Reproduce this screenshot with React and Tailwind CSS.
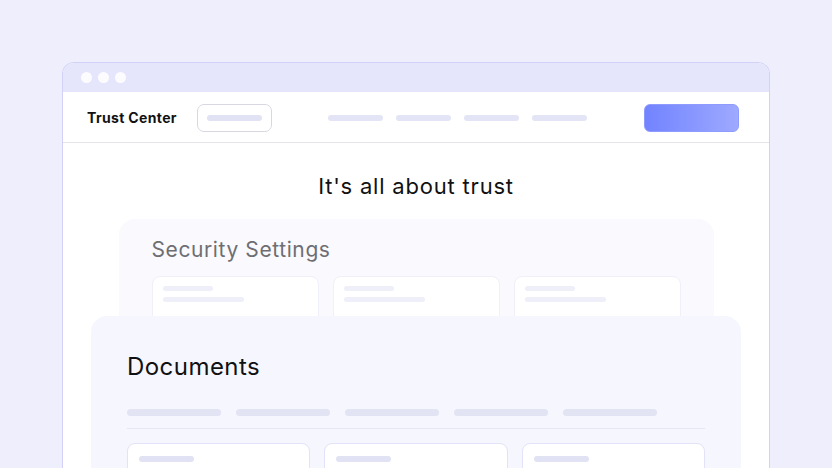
import React from "react";

const Bar = ({ w, h = "h-[6px]", c = "bg-[#e3e4f5]" }) => (
  <div className={`${h} ${c} rounded-full`} style={{ width: w }} />
);

function SubCard() {
  return (
    <div className="flex-1 h-[64px] bg-white rounded-[8px] border border-[#f0f0f8] px-[10px] pt-[9px] flex flex-col gap-[6px]">
      <div className="h-[5px] w-[50px] rounded-full bg-[#eeeff8]" />
      <div className="h-[5px] w-[81px] rounded-full bg-[#eeeff8]" />
    </div>
  );
}

function DocCard() {
  return (
    <div className="flex-1 h-[60px] bg-white rounded-[8px] border border-[#e2e2f8] px-[11px] pt-[12px]">
      <div className="h-[6px] w-[55px] rounded-full bg-[#e1e2f3]" />
    </div>
  );
}

export default function App() {
  return (
    <div
      className="w-[832px] h-[468px] overflow-hidden bg-[#eeeefd] pt-[62px] px-[62px]"
      style={{ fontFamily: "Inter, 'Noto Sans', sans-serif" }}
    >
      <div className="h-[420px] bg-white rounded-t-[12px] border border-b-0 border-[#d2d2f8] overflow-hidden flex flex-col">
        {/* title bar */}
        <div className="h-[29px] bg-[#e5e5fc] flex items-center gap-[6px] pl-[18px] shrink-0">
          <div className="w-[11px] h-[11px] rounded-full bg-white/90" />
          <div className="w-[11px] h-[11px] rounded-full bg-white/90" />
          <div className="w-[11px] h-[11px] rounded-full bg-white/90" />
        </div>
        {/* header */}
        <div className="h-[51px] border-b border-[#e4e4ea] flex items-center pl-[24px] pr-[30px] pt-[1px] shrink-0">
          <div className="text-[14px] font-bold text-[#111] tracking-[0.35px] w-[110px]">Trust Center</div>
          <div className="w-[75px] h-[28px] rounded-[7px] border border-[#d8d8e2] flex items-center px-[9px]">
            <div className="h-[6px] w-[56px] rounded-full bg-[#e1e2f3]" />
          </div>
          <div className="flex gap-[13px] ml-[56px]">
            <Bar w={55} />
            <Bar w={55} />
            <Bar w={55} />
            <Bar w={55} />
          </div>
          <div className="ml-auto w-[95px] h-[28px] rounded-[6px] bg-gradient-to-r from-[#7283ff] to-[#9ea9ff] border border-[#8f9bff]" />
        </div>
        {/* content */}
        <div className="flex flex-col items-center pt-[28px]">
          <div className="text-[22px] leading-[30px] text-[#111] tracking-[0.8px]">It's all about trust</div>
          <div className="mt-[18px] w-[595px] h-[130px] bg-[#f9f9fe] rounded-[16px] px-[33px] pt-[17px] shrink-0">
            <div className="text-[21px] leading-[28px] text-[#6e6e72] tracking-[0.6px]">Security Settings</div>
            <div className="mt-[12px] flex gap-[14px]">
              <SubCard />
              <SubCard />
              <SubCard />
            </div>
          </div>
          <div className="relative -mt-[33px] w-[650px] h-[200px] bg-[#f6f6fe] rounded-[16px] px-[36px] pt-[35px] shrink-0">
            <div className="text-[24px] leading-[32px] text-[#111] tracking-[0.45px]">Documents</div>
            <div className="mt-[26px] flex gap-[15px]">
              <Bar w={94} h="h-[7px]" c="bg-[#e2e3f3]" />
              <Bar w={94} h="h-[7px]" c="bg-[#e2e3f3]" />
              <Bar w={94} h="h-[7px]" c="bg-[#e2e3f3]" />
              <Bar w={94} h="h-[7px]" c="bg-[#e2e3f3]" />
              <Bar w={94} h="h-[7px]" c="bg-[#e2e3f3]" />
            </div>
            <div className="mt-[12px] h-px bg-[#e5e5f6]" />
            <div className="mt-[14px] flex gap-[14px]">
              <DocCard />
              <DocCard />
              <DocCard />
            </div>
          </div>
        </div>
      </div>
    </div>
  );
}
